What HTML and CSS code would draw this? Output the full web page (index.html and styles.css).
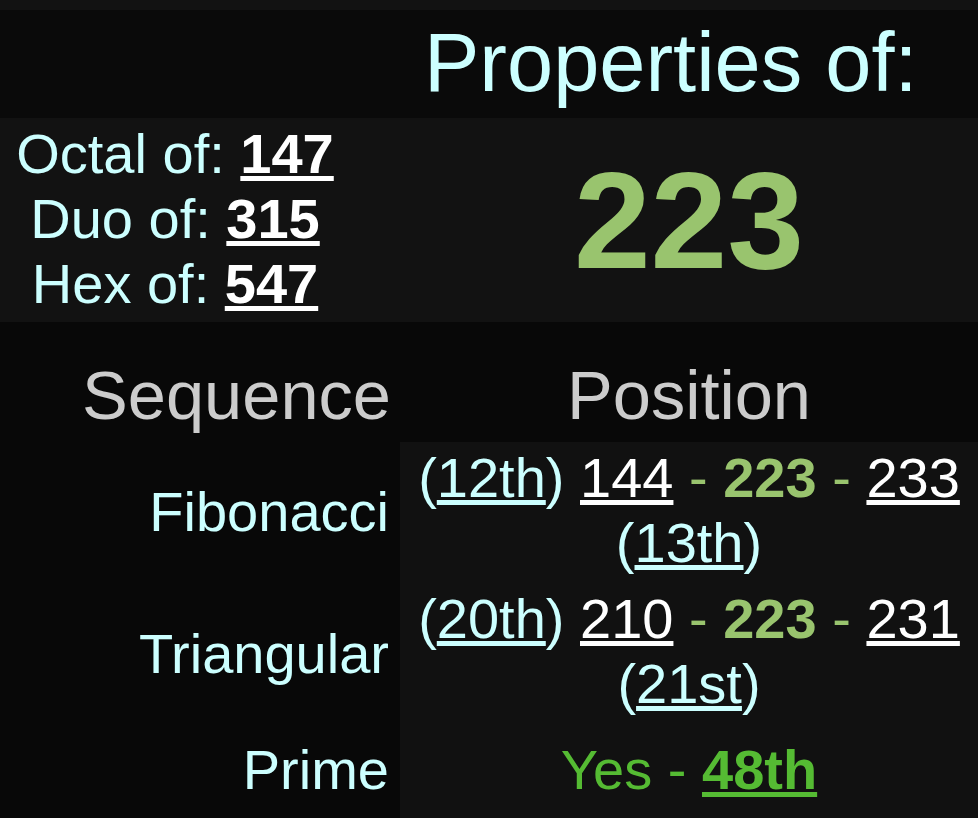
FILE: index.html
```html
<!DOCTYPE html>
<html lang="en">
<head>
<meta charset="utf-8">
<title>Properties of 223</title>
<link rel="stylesheet" href="styles.css">
</head>
<body>
<div class="page">
  <header class="title-row">
    <div class="title-spacer"></div>
    <h1 class="title">Properties of:</h1>
  </header>
  <section class="summary">
    <div class="bases">
      <div class="base-line">Octal of: <a class="base-num" href="#">147</a></div>
      <div class="base-line">Duo of: <a class="base-num" href="#">315</a></div>
      <div class="base-line">Hex of: <a class="base-num" href="#">547</a></div>
    </div>
    <div class="number">223</div>
  </section>
  <section class="sequences">
    <div class="head seq-head">Sequence</div>
    <div class="head pos-head">Position</div>

    <div class="label">Fibonacci</div>
    <div class="pos pos-first">(<a class="ord" href="#">12th</a>) <a class="nb" href="#">144</a> <span class="sep">-</span> <b class="cur">223</b> <span class="sep">-</span> <a class="nb" href="#">233</a> (<a class="ord" href="#">13th</a>)</div>

    <div class="label">Triangular</div>
    <div class="pos pos-second">(<a class="ord" href="#">20th</a>) <a class="nb" href="#">210</a> <span class="sep">-</span> <b class="cur">223</b> <span class="sep">-</span> <a class="nb" href="#">231</a> (<a class="ord" href="#">21st</a>)</div>

    <div class="label label-prime">Prime</div>
    <div class="pos pos-prime"><span class="prime">Yes - <a class="prime-ord" href="#">48th</a></span></div>
  </section>
</div>
</body>
</html>
```

FILE: styles.css
```css
html, body {
  margin: 0;
  padding: 0;
  background: #121212;
}
body {
  font-family: "Liberation Sans", Arial, Helvetica, sans-serif;
  color: #ccffff;
  padding-top: 10px;
}
a { color: inherit; }

.page {
  width: 978px;
}

.title-row {
  display: grid;
  grid-template-columns: 400px 1fr;
  background: #0a0a0a;
  height: 108px;
  box-sizing: border-box;
  padding-top: 5px;
}
.title {
  margin: 0;
  font-weight: normal;
  font-size: 83px;
  line-height: normal;
  color: #ccffff;
  padding-left: 24px;
}

.summary {
  display: grid;
  grid-template-columns: 400px 1fr;
  align-items: center;
  background: #121212;
  height: 204px;
}
.bases {
  padding-right: 50px;
  text-align: center;
  font-size: 56px;
  line-height: normal;
  padding-bottom: 4px;
}
.base-num {
  color: #ffffff;
  font-weight: bold;
}
.number {
  text-align: center;
  font-size: 138px;
  font-weight: bold;
  color: #99c46e;
  line-height: normal;
}

.sequences {
  display: grid;
  grid-template-columns: 400px 1fr;
  background: #080808;
}
.head {
  font-size: 68.6px;
  line-height: normal;
  color: #cccccc;
  padding: 34px 0 7px;
}
.seq-head {
  text-align: right;
  padding-right: 9px;
}
.pos-head {
  text-align: center;
}

.label {
  display: flex;
  align-items: center;
  justify-content: flex-end;
  padding-right: 11px;
  font-size: 56px;
  line-height: normal;
  color: #ccffff;
}
.pos {
  background: #111111;
  text-align: center;
  font-size: 56px;
  line-height: normal;
  color: #ccffff;
}
.pos-first { padding: 3px 0 6px; }
.pos-second { padding: 5px 0 10px; }
.pos-prime { padding: 11px 0 40px; }
.label-prime { padding-top: 11px; padding-bottom: 40px; }

.nb { color: #ffffff; }
.sep { color: #99c46e; }
.cur { color: #99c46e; font-weight: bold; }
.prime { color: #55bb33; }
.prime-ord { color: #55bb33; font-weight: bold; }
```
